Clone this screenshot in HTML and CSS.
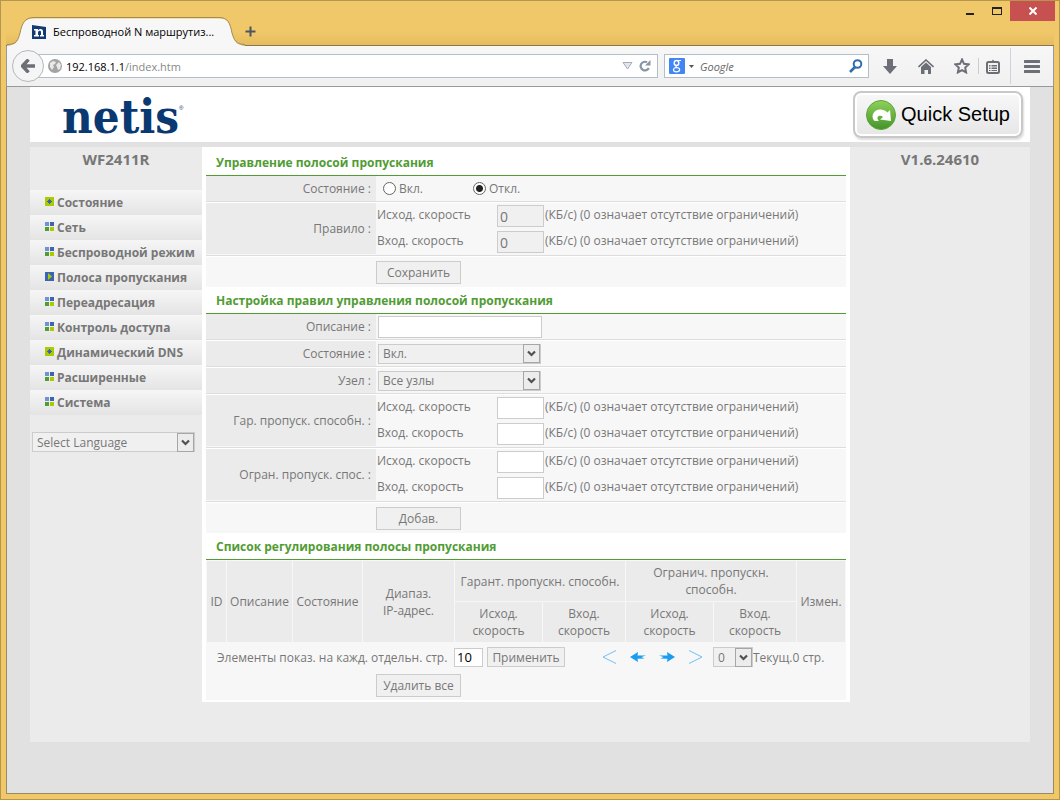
FILE: index.html
```html
<!DOCTYPE html>
<html lang="ru">
<head>
    <meta charset="UTF-8">
    <meta name="viewport" content="width=device-width, initial-scale=1.0">
    <title>Беспроводной N маршрутизатор</title>
    <link rel="stylesheet" href="styles.css">
</head>
<body>
    <svg class="defs" width="0" height="0">
        <symbol id="plus" viewBox="0 0 9 9">
            <rect width="9" height="9" fill="#aacb00"/>
            <path d="M4 2h1v1h1v1h1v1H6v1H5v1H4V6H3V5H2V4h1V3h1z" fill="#3c64b4"/>
        </symbol>
        <symbol id="squares" viewBox="0 0 9 9">
            <path d="M0 0h4v4H0z" fill="#7590cd"/>
            <path d="M5 0h4v4H5z" fill="#3c64b4"/>
            <path d="M0 5h4v4H0z" fill="#519c33"/>
            <path d="M5 5h4v4H5z" fill="#aacb00"/>
        </symbol>
        <symbol id="current" viewBox="0 0 9 9">
            <rect width="9" height="9" fill="#3c64b4"/>
            <path d="M3 1l4 3.500-4 3.500z" fill="#aacb00"/>
        </symbol>
        <symbol id="arrow" viewBox="0 0 17 19">
            <rect x="0.500" y="0.500" width="16" height="18" fill="#ececec" stroke="#a6a6a6"/>
            <path d="M5 7.500l3.500 3.500L12 7.500" fill="none" stroke="#505050" stroke-width="2.200"/>
        </symbol>
    </svg>

    <div class="window">
        <div class="titlebar">
            <div class="tab">
                <svg class="tab-shape" width="238" height="29" viewBox="0 0 238 29">
                    <path d="M0 28.500C10 28.500 11 23 13 16C15 6 18 1.500 27 1.500H212C221 1.500 223 6 225 16C227 23 229 28.500 238 28.500V29H0z" fill="#f7f7f8"/>
                    <path d="M0 27.500C10 27.500 11 23 13 16C15 6 18 0.500 27 0.500H212C221 0.500 223 6 225 16C227 23 229 27.500 238 27.500" fill="none" stroke="#a18a52"/>
                </svg>
                <div class="tab-content">
                    <svg width="14" height="14" viewBox="0 0 14 14">
                        <path d="M0 0l14 2v12H0z" fill="#143a73"/>
                        <path d="M2 4h4v1.200C7.500 3.500 11 3.600 11 6.500V10h1v1.500H8V10h1V7c0-2-3-1.500-3 .5V10h1v1.500H2V10h1.500V5.500H2z" fill="#fff"/>
                    </svg>
                    <span>Беспроводной N маршрутиз...</span>
                </div>
            </div>
            <button class="new-tab" aria-label="Новая вкладка">
                <svg width="11" height="11" viewBox="0 0 11 11"><path d="M5.500 0.500v10M0.500 5.500h10" stroke="#4d5562" stroke-width="2"/></svg>
            </button>
            <div class="window-buttons">
                <button aria-label="Свернуть"><svg width="10" height="10" viewBox="0 0 10 10"><path d="M1 7h8v2H1z" fill="#222"/></svg></button>
                <button aria-label="Развернуть"><svg width="10" height="10" viewBox="0 0 10 10"><path d="M0 1h10v8H0zM1 3v5h8V3z" fill="#222" fill-rule="evenodd"/></svg></button>
                <button class="close" aria-label="Закрыть"><svg width="8" height="8" viewBox="0 0 8 8"><path d="M0.500 0.500l7 7M7.500 0.500l-7 7" stroke="#fff" stroke-width="2"/></svg></button>
            </div>
        </div>

        <div class="toolbar">
            <button class="back" aria-label="Назад">
                <svg width="14" height="14" viewBox="0 0 14 14"><path d="M7.500 0.500L1.500 7l6 6.500M1.500 7H14" fill="none" stroke="#6c6f75" stroke-width="3.400"/></svg>
            </button>
            <div class="address">
                <svg width="14" height="14" viewBox="0 0 14 14">
                    <circle cx="7" cy="7" r="7" fill="#a3a3a3"/>
                    <path d="M2 4l3-2 3 1-1 2-2 1 1 2-2 3-2-3zM8 6l3-3 2 3-1 4-2 1-1-3z" fill="#e9e9e9"/>
                </svg>
                <span class="url">192.168.1.1<span>/index.htm</span></span>
                <svg width="11" height="8" viewBox="0 0 11 8"><path d="M1 0.500h9L5.500 7z" fill="#e3e7ec" stroke="#a3adb8"/></svg>
                <svg class="reload" width="12" height="12" viewBox="0 0 12 12">
                    <path d="M8 2.300A4.300 4.300 0 1 0 9.800 8" fill="none" stroke="#8796a5" stroke-width="2.200"/>
                    <path d="M11.500 0v5.500H6z" fill="#8796a5"/>
                </svg>
            </div>
            <div class="search">
                <svg width="16" height="16" viewBox="0 0 16 16">
                    <rect width="16" height="16" rx="1" fill="#4285f4"/>
                    <ellipse cx="7.500" cy="5" rx="2.300" ry="2.500" fill="none" stroke="#fff" stroke-width="1.400"/>
                    <path d="M8 2.500h4M8 7.500c-2 1-1 2 .5 2.300M7.500 9.500c-4 0-4 4.300 0 4.300s4.500-4.300 0-4.300z" fill="none" stroke="#fff" stroke-width="1.200"/>
                </svg>
                <svg width="5" height="3" viewBox="0 0 5 3"><path d="M0 0h5L2.500 3z" fill="#555"/></svg>
                <input type="text" placeholder="Google" aria-label="Поиск">
                <svg width="14" height="14" viewBox="0 0 14 14"><circle cx="8.500" cy="5" r="3.800" fill="none" stroke="#2f6fae" stroke-width="2"/><path d="M6 8l-5 5" stroke="#2f6fae" stroke-width="2.600"/></svg>
            </div>
            <div class="tools">
                <button aria-label="Загрузки"><svg width="14" height="15" viewBox="0 0 14 15"><path d="M4 0h6v7h4l-7 8-7-8h4z" fill="#6c6f75"/></svg></button>
                <button aria-label="Домой"><svg width="16" height="15" viewBox="0 0 16 15"><path d="M0.500 8L8 1l7.500 7" fill="none" stroke="#6c6f75" stroke-width="1.600"/><path d="M3 8l5-4.500L13 8v7h-3v-4H6.500v4H3z" fill="#6c6f75"/></svg></button>
                <button aria-label="Закладки"><svg width="16" height="16" viewBox="0 0 16 16"><path d="M8 1.500l2 4.300 4.700.6-3.500 3.200.9 4.800L8 12.100l-4.100 2.300.9-4.800L1.300 6.400 6 5.800z" fill="none" stroke="#6c6f75" stroke-width="2"/></svg></button>
                <button class="list" aria-label="Список закладок"><svg width="14" height="15" viewBox="0 0 14 15"><path d="M5 3L7 0.500 9 3" fill="#6c6f75"/><rect x="1" y="3" width="12" height="11" rx="1.500" fill="none" stroke="#6c6f75" stroke-width="2"/><path d="M3 6h1.500v1.500H3zM5.500 6H11v1.500H5.500zM3 8.500h1.500V10H3zM5.500 8.500H11V10H5.500zM3 11h1.500v1H3zM5.500 11H11v1H5.500z" fill="#6c6f75"/></svg></button>
                <button class="menu" aria-label="Меню"><svg width="16" height="13" viewBox="0 0 16 13"><path d="M1 1.500h14M1 6.500h14M1 11.500h14" stroke="#6c6f75" stroke-width="3" stroke-linecap="round"/></svg></button>
            </div>
        </div>

        <div class="page">
            <header class="header">
                <div class="logo">netis<sup>®</sup></div>
                <button class="quick">
                    <svg width="30" height="30" viewBox="0 0 30 30">
                        <defs>
                            <linearGradient id="green" x1="0" y1="0" x2="0" y2="1">
                                <stop offset="0" stop-color="#8fd15a"/>
                                <stop offset="1" stop-color="#44942a"/>
                            </linearGradient>
                        </defs>
                        <circle cx="15" cy="15" r="14.500" fill="url(#green)" stroke="#5da53c"/>
                        <path d="M8 20.500C4 15 9 8.500 15 9.500c3 .3 5 1.500 6.500 3L24 10l1 11-11-1.500 3-2.500c-2-2-5-1.500-5.500.5-.3 1.300.5 2.500 1.500 3-2 .8-4 .8-5 0z" fill="#fff"/>
                    </svg>
                    Quick Setup
                </button>
            </header>

            <div class="columns">
                <aside class="sidebar">
                    <h2>WF2411R</h2>
                    <nav>
                        <a href="#"><svg width="9" height="9"><use href="#plus"/></svg>Состояние</a>
                        <a href="#"><svg width="9" height="9"><use href="#squares"/></svg>Сеть</a>
                        <a href="#"><svg width="9" height="9"><use href="#squares"/></svg>Беспроводной режим</a>
                        <a href="#"><svg width="9" height="9"><use href="#current"/></svg>Полоса пропускания</a>
                        <a href="#"><svg width="9" height="9"><use href="#squares"/></svg>Переадресация</a>
                        <a href="#"><svg width="9" height="9"><use href="#squares"/></svg>Контроль доступа</a>
                        <a href="#"><svg width="9" height="9"><use href="#plus"/></svg>Динамический DNS</a>
                        <a href="#"><svg width="9" height="9"><use href="#squares"/></svg>Расширенные</a>
                        <a href="#"><svg width="9" height="9"><use href="#squares"/></svg>Система</a>
                    </nav>
                    <div class="select language">
                        <select aria-label="Select Language"><option>Select Language</option></select>
                        <svg width="17" height="19"><use href="#arrow"/></svg>
                    </div>
                </aside>

                <main class="main">
                    <section>
                        <h3>Управление полосой пропускания</h3>
                        <div class="row">
                            <span class="name">Состояние :</span>
                            <div class="value">
                                <label class="radio"><input type="radio" name="state">Вкл.</label>
                                <label class="radio"><input type="radio" name="state" checked>Откл.</label>
                            </div>
                        </div>
                        <div class="row tall">
                            <span class="name">Правило :</span>
                            <div class="value">
                                <div class="speed">
                                    <label for="rule-up">Исход. скорость</label>
                                    <input type="text" id="rule-up" value="0" disabled>
                                    <span>(КБ/с) (0 означает отсутствие ограничений)</span>
                                </div>
                                <div class="speed">
                                    <label for="rule-down">Вход. скорость</label>
                                    <input type="text" id="rule-down" value="0" disabled>
                                    <span>(КБ/с) (0 означает отсутствие ограничений)</span>
                                </div>
                            </div>
                        </div>
                        <div class="submit"><button class="btn">Сохранить</button></div>
                    </section>

                    <section>
                        <h3>Настройка правил управления полосой пропускания</h3>
                        <div class="row">
                            <label class="name" for="desc">Описание :</label>
                            <div class="value"><input type="text" id="desc" class="desc"></div>
                        </div>
                        <div class="row">
                            <label class="name" for="status">Состояние :</label>
                            <div class="value">
                                <div class="select">
                                    <select id="status"><option>Вкл.</option><option>Откл.</option></select>
                                    <svg width="17" height="19"><use href="#arrow"/></svg>
                                </div>
                            </div>
                        </div>
                        <div class="row">
                            <label class="name" for="host">Узел :</label>
                            <div class="value">
                                <div class="select">
                                    <select id="host"><option>Все узлы</option></select>
                                    <svg width="17" height="19"><use href="#arrow"/></svg>
                                </div>
                            </div>
                        </div>
                        <div class="row tall">
                            <span class="name">Гар. пропуск. способн. :</span>
                            <div class="value">
                                <div class="speed">
                                    <label for="min-up">Исход. скорость</label>
                                    <input type="text" id="min-up">
                                    <span>(КБ/с) (0 означает отсутствие ограничений)</span>
                                </div>
                                <div class="speed">
                                    <label for="min-down">Вход. скорость</label>
                                    <input type="text" id="min-down">
                                    <span>(КБ/с) (0 означает отсутствие ограничений)</span>
                                </div>
                            </div>
                        </div>
                        <div class="row tall">
                            <span class="name">Огран. пропуск. спос. :</span>
                            <div class="value">
                                <div class="speed">
                                    <label for="max-up">Исход. скорость</label>
                                    <input type="text" id="max-up">
                                    <span>(КБ/с) (0 означает отсутствие ограничений)</span>
                                </div>
                                <div class="speed">
                                    <label for="max-down">Вход. скорость</label>
                                    <input type="text" id="max-down">
                                    <span>(КБ/с) (0 означает отсутствие ограничений)</span>
                                </div>
                            </div>
                        </div>
                        <div class="submit"><button class="btn">Добав.</button></div>
                    </section>

                    <section>
                        <h3>Список регулирования полосы пропускания</h3>
                        <table class="list-table">
                            <colgroup>
                                <col class="c-id"><col class="c-desc"><col class="c-state"><col class="c-ip">
                                <col class="c-up"><col class="c-down"><col class="c-up"><col class="c-down">
                                <col class="c-edit">
                            </colgroup>
                            <thead>
                                <tr>
                                    <th rowspan="2">ID</th>
                                    <th rowspan="2">Описание</th>
                                    <th rowspan="2">Состояние</th>
                                    <th rowspan="2">Диапаз.<br>IP-адрес.</th>
                                    <th colspan="2">Гарант. пропускн. способн.</th>
                                    <th colspan="2">Огранич. пропускн.<br>способн.</th>
                                    <th rowspan="2">Измен.</th>
                                </tr>
                                <tr>
                                    <th>Исход.<br>скорость</th>
                                    <th>Вход.<br>скорость</th>
                                    <th>Исход.<br>скорость</th>
                                    <th>Вход.<br>скорость</th>
                                </tr>
                            </thead>
                        </table>
                        <div class="pager">
                            <div class="per-page">
                                <label for="count">Элементы показ. на кажд. отдельн. стр.</label>
                                <input type="text" id="count" value="10">
                                <button class="btn small">Применить</button>
                            </div>
                            <div class="pages">
                                <a href="#" aria-label="Первая"><svg width="15" height="14" viewBox="0 0 15 14"><path d="M14 0.500L1 7l13 6.500" fill="none" stroke="#6cc0f5"/></svg></a>
                                <a href="#" aria-label="Предыдущая"><svg width="16" height="10" viewBox="0 0 16 10"><path d="M0 5l8-5-.5 3.500L16 3.500 11.500 5l3 1.500-7 .2L8 10z" fill="#1a9df0"/></svg></a>
                                <a href="#" aria-label="Следующая"><svg width="16" height="10" viewBox="0 0 16 10"><path d="M16 5L8 0l.5 3.500L0 3.500 4.500 5l-3 1.500 7 .2L8 10z" fill="#1a9df0"/></svg></a>
                                <a href="#" aria-label="Последняя"><svg width="15" height="14" viewBox="0 0 15 14"><path d="M1 0.500L14 7 1 13.500" fill="none" stroke="#6cc0f5"/></svg></a>
                            </div>
                            <div class="select page-select">
                                <select id="page"><option>0</option></select>
                                <svg width="17" height="19"><use href="#arrow"/></svg>
                            </div>
                            <label for="page">Текущ.0 стр.</label>
                        </div>
                        <div class="submit last"><button class="btn">Удалить все</button></div>
                    </section>
                </main>

                <aside class="version"><h2>V1.6.24610</h2></aside>
            </div>
        </div>
    </div>
</body>
</html>
```
FILE: styles.css
```css
* {
    box-sizing: border-box;
}
body {
    margin: 0;
    font-family: "Open Sans", "Noto Sans", sans-serif;
    font-size: 12px;
    line-height: 17px;
    color: #777;
}
h2, h3 {
    margin: 0;
}
button, input, select {
    font: inherit;
    color: inherit;
    margin: 0;
}
button {
    padding: 0;
    border: none;
    background: none;
}
svg {
    display: block;
    flex-shrink: 0;
}
a {
    color: inherit;
    text-decoration: none;
}
.defs {
    display: none;
}

/* browser window */
.window {
    display: flex;
    flex-direction: column;
    min-height: 100vh;
    padding: 0 5px 5px;
    border: 1px solid #b5964c;
    background: #f0c869;
}
.titlebar {
    display: flex;
    align-items: flex-end;
    height: 45px;
    padding-left: 1px;
    background: linear-gradient(#f0c869 70%, #e5bd60);
    border-bottom: 1px solid #8b7645;
}
.tab {
    display: grid;
    margin-bottom: -1px;
    font-size: 11px;
}
.tab-shape, .tab-content {
    grid-area: 1 / 1;
}
.tab-content {
    display: flex;
    align-items: center;
    gap: 7px;
    padding-left: 25px;
    color: #000;
}
.new-tab {
    padding: 0 0 8px;
}
.window-buttons {
    display: flex;
    align-self: flex-start;
    margin: 0 -1px 0 auto;
}
.window-buttons button {
    display: flex;
    align-items: center;
    justify-content: center;
    width: 27px;
    height: 20px;
}
.window-buttons .close {
    width: 45px;
    background: #c75050;
}
.toolbar {
    display: flex;
    align-items: center;
    height: 41px;
    padding-left: 5px;
    background: linear-gradient(#f7f7f8, #f0f0f0);
    border: 1px solid #999;
    border-top: none;
}
.back {
    display: flex;
    align-items: center;
    justify-content: center;
    width: 32px;
    height: 32px;
    border: 1px solid #b5b8bb;
    border-radius: 50%;
    background: #f5f5f5;
    z-index: 1;
}
.address, .search {
    display: flex;
    align-items: center;
    height: 24px;
    border: 1px solid #b2bec9;
    background: #fff;
}
.address {
    flex: 1;
    gap: 4px;
    margin-left: -16px;
    padding: 0 6px 0 19px;
    font-size: 11px;
}
.url {
    flex: 1;
    color: #000;
}
.url span {
    color: #888;
}
.reload {
    margin-left: 2px;
}
.search {
    width: 205px;
    gap: 4px;
    margin-left: 6px;
    padding: 0 5px 0 4px;
    font-size: 11px;
}
.search input {
    flex: 1;
    min-width: 0;
    border: none;
    padding: 0 2px;
    font-style: italic;
}
.search input::placeholder {
    color: #666;
}
.tools {
    display: flex;
    align-items: center;
    height: 100%;
    padding-left: 3px;
}
.tools button {
    display: flex;
    align-items: center;
    justify-content: center;
    width: 36px;
}
.tools .list {
    width: 28px;
    height: 16px;
    margin-left: -2px;
    border-left: 1px solid #ccc;
}
.tools .menu {
    width: 43px;
    height: 36px;
    margin-left: 4px;
    border-left: 1px solid #ccd3da;
}

/* router page */
.page {
    flex: 1;
    padding: 0 23px 51px;
    border: 1px solid #998a5f;
    border-top: none;
    background: #e1e1e1;
}
.header {
    display: flex;
    align-items: center;
    justify-content: space-between;
    height: 55px;
    padding: 0 7px 0 32px;
    background: #fff;
}
.logo {
    padding-top: 4px;
    font-family: "DejaVu Serif Condensed", "DejaVu Serif", serif;
    font-size: 47px;
    font-weight: bold;
    line-height: 51px;
    color: #0a3870;
}
.logo sup {
    font-family: "Liberation Sans", sans-serif;
    font-size: 6px;
    font-weight: normal;
    line-height: 6px;
    vertical-align: 23px;
}
.quick {
    display: flex;
    align-items: center;
    gap: 5px;
    height: 47px;
    padding: 0 11px;
    border: 2px solid #c8c8c8;
    border-radius: 8px;
    background: linear-gradient(#f8f8f8, #e6e6e6);
    box-shadow: inset 0 0 0 2px #fff, 1px 2px 2px #ddd;
    font-family: "Liberation Sans", sans-serif;
    font-size: 20px;
    color: #000;
}
.columns {
    display: flex;
    align-items: flex-start;
    margin-top: 5px;
    padding-bottom: 40px;
    background: #ebebeb;
}
.sidebar {
    width: 172px;
}
.version {
    width: 180px;
}
h2 {
    padding: 2px 0 21px;
    font-size: 15px;
    line-height: 20px;
    text-align: center;
}
nav a {
    display: flex;
    align-items: center;
    gap: 3px;
    height: 25px;
    padding-left: 15px;
    background: linear-gradient(#f6f6f6, #e4e4e4);
    font-weight: bold;
    white-space: nowrap;
}
nav svg {
    margin-bottom: 2px;
}
.select {
    display: inline-grid;
    width: 163px;
    height: 20px;
}
.select select, .select svg {
    grid-area: 1 / 1;
}
.select select {
    appearance: none;
    width: 100%;
    height: 100%;
    padding: 0 4px;
    border: 1px solid #ccc;
    border-radius: 0;
    background: #f0f0f0;
}
.select svg {
    justify-self: end;
    align-self: center;
    margin-right: 1px;
    pointer-events: none;
}
.language {
    margin: 17px 0 0 2px;
}
.main {
    flex: 1;
    padding: 2px 4px;
    background: #fff;
}
h3 {
    padding: 5px 10px 4px;
    border-bottom: 1px solid #519c33;
    font-size: 12px;
    line-height: 17px;
    color: #519c33;
}
.row {
    display: flex;
    height: 26px;
    margin-bottom: 1px;
    border-bottom: 1px solid #ddd;
    background: #f7f7f7;
}
.tall {
    height: 53px;
}
.name {
    display: flex;
    align-items: center;
    justify-content: flex-end;
    width: 170px;
    padding-right: 5px;
    background: #ebebeb;
}
.tall .name {
    border-bottom: 1px solid #f7f7f7;
}
.value {
    flex: 1;
    align-self: center;
    display: flex;
    align-items: center;
    padding-left: 2px;
}
.tall .value {
    display: block;
    padding-left: 1px;
}
.radio {
    display: flex;
    align-items: center;
    gap: 3px;
    width: 90px;
    padding-left: 5px;
}
.radio input {
    appearance: none;
    width: 13px;
    height: 13px;
    border: 1px solid #666;
    border-radius: 50%;
    background: #fff;
}
.radio input:checked {
    background: radial-gradient(#222 3px, #fff 4px);
}
.speed {
    display: flex;
    align-items: center;
    gap: 1px;
    height: 26px;
}
.speed label {
    width: 119px;
}
.speed label, .speed span {
    padding-bottom: 3px;
}
.value input[type="text"], .pager input {
    height: 22px;
    padding: 0 2px;
    border: 1px solid #ccc;
    background: #fff;
}
.speed input[type="text"] {
    width: 47px;
    font-size: 14px;
}
.value input[type="text"]:disabled {
    background: #f0f0f0;
}
.value .desc {
    width: 164px;
}
.submit {
    display: flex;
    align-items: center;
    height: 30px;
    padding-left: 170px;
    background: #f7f7f7;
}
.btn {
    width: 85px;
    height: 23px;
    border: 1px solid #ccc;
    background: #f0f0f0;
}
.list-table {
    width: 100%;
    table-layout: fixed;
    border-collapse: separate;
    border-spacing: 1px;
    background: #f7f7f7;
}
.list-table th {
    height: 40px;
    padding: 0;
    background: #ebebeb;
    font-weight: normal;
}
.c-id {
    width: 19px;
}
.c-desc {
    width: 65px;
}
.c-state {
    width: 69px;
}
.c-ip {
    width: 91px;
}
.c-up {
    width: 87px;
}
.c-down {
    width: 82px;
}
.c-edit {
    width: 48px;
}
.pager {
    display: flex;
    align-items: center;
    height: 28px;
    padding-left: 11px;
    background: #f7f7f7;
}
.per-page {
    display: flex;
    align-items: center;
}
.per-page label {
    min-width: 237px;
}
.pager input {
    width: 29px;
    height: 19px;
    color: #000;
    font-size: 13px;
}
.pager .small {
    width: 78px;
    height: 20px;
    margin-left: 4px;
}
.pages {
    display: flex;
    align-items: center;
    gap: 13px;
    margin: 0 10px 0 37px;
}
.page-select {
    width: 40px;
}
.last {
    height: 29px;
}
```
